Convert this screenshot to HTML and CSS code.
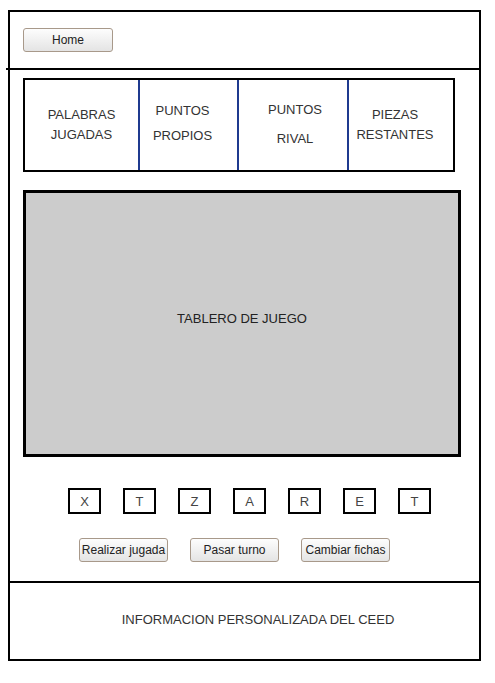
FILE: index.html
```html
<!DOCTYPE html>
<html lang="es">
<head>
<meta charset="utf-8">
<title>Juego</title>
<link rel="stylesheet" href="styles.css">
</head>
<body>
<div class="frame">
  <header class="top">
    <button class="btn btn-home">Home</button>
  </header>
  <div class="rule"></div>
  <main class="main">
    <div class="stats">
      <div class="cell c1"><span>PALABRAS</span><span>JUGADAS</span></div>
      <div class="cell c2"><span>PUNTOS</span><span>PROPIOS</span></div>
      <div class="cell c3"><span>PUNTOS</span><span>RIVAL</span></div>
      <div class="cell c4"><span>PIEZAS</span><span>RESTANTES</span></div>
    </div>
    <div class="board">TABLERO DE JUEGO</div>
    <div class="tiles">
      <div class="tile">X</div>
      <div class="tile">T</div>
      <div class="tile">Z</div>
      <div class="tile">A</div>
      <div class="tile">R</div>
      <div class="tile">E</div>
      <div class="tile">T</div>
    </div>
    <div class="actions">
      <button class="btn btn-act">Realizar jugada</button>
      <button class="btn btn-act">Pasar turno</button>
      <button class="btn btn-act">Cambiar fichas</button>
    </div>
  </main>
  <footer class="foot">INFORMACION PERSONALIZADA DEL CEED</footer>
</div>
</body>
</html>
```
FILE: styles.css
```css
* { box-sizing: border-box; }
html, body { margin: 0; padding: 0; background: #fff; }
body {
  font-family: "Liberation Sans", Arial, sans-serif;
  color: #333;
}
.frame {
  margin: 10px 0 0 8px;
  width: 473px;
  height: 651px;
  border: 2px solid #000;
  display: flex;
  flex-direction: column;
}
.top {
  height: 56px;
  padding: 16px 0 0 13px;
}
.btn {
  font-family: "Liberation Sans", Arial, sans-serif;
  font-size: 12px;
  color: #222;
  border: 1px solid #a8998a;
  border-radius: 3px;
  background: linear-gradient(#fdfdfd, #e4e4e4);
  padding: 0;
  height: 24px;
  cursor: pointer;
}
.btn-home { width: 90px; }
.rule {
  height: 2px;
  background: #000;
  margin-left: -4px;
  width: 473px;
}
.main {
  height: 511px;
  padding: 8px 0 0 13px;
  display: flex;
  flex-direction: column;
}
.stats {
  width: 432px;
  height: 94px;
  border: 2px solid #000;
  display: flex;
}
.cell {
  display: flex;
  flex-direction: column;
  justify-content: center;
  align-items: center;
  font-size: 13px;
  line-height: 20px;
  color: #333;
}
.c1 { width: 113px; }
.c2 { width: 99px; border-left: 2px solid #1f3a8f; line-height: 25px; padding: 0 12px 5px 0; }
.c3 { width: 110px; border-left: 2px solid #1f3a8f; line-height: 29px; padding: 0 0 3px 4px; }
.c4 { width: 106px; border-left: 2px solid #1f3a8f; padding: 0 12px 0 0; }
.board {
  margin-top: 18px;
  width: 438px;
  height: 267px;
  border: 3px solid #000;
  background: #cccccc;
  display: flex;
  align-items: center;
  justify-content: center;
  font-size: 13px;
  color: #222;
  padding-bottom: 10px;
}
.tiles {
  margin: 31px 0 0 45px;
  display: flex;
  gap: 22px;
}
.tile {
  width: 33px;
  height: 26px;
  border: 2px solid #000;
  display: flex;
  align-items: center;
  justify-content: center;
  padding-top: 1px;
  font-size: 13px;
  color: #444;
}
.actions {
  margin: 24px 0 0 56px;
  display: flex;
  gap: 22px;
}
.btn-act { width: 89px; }
.foot {
  border-top: 2px solid #000;
  flex: 1;
  display: flex;
  align-items: center;
  justify-content: center;
  padding: 0 0 4px 27px;
  font-size: 13px;
  color: #333;
}
```
